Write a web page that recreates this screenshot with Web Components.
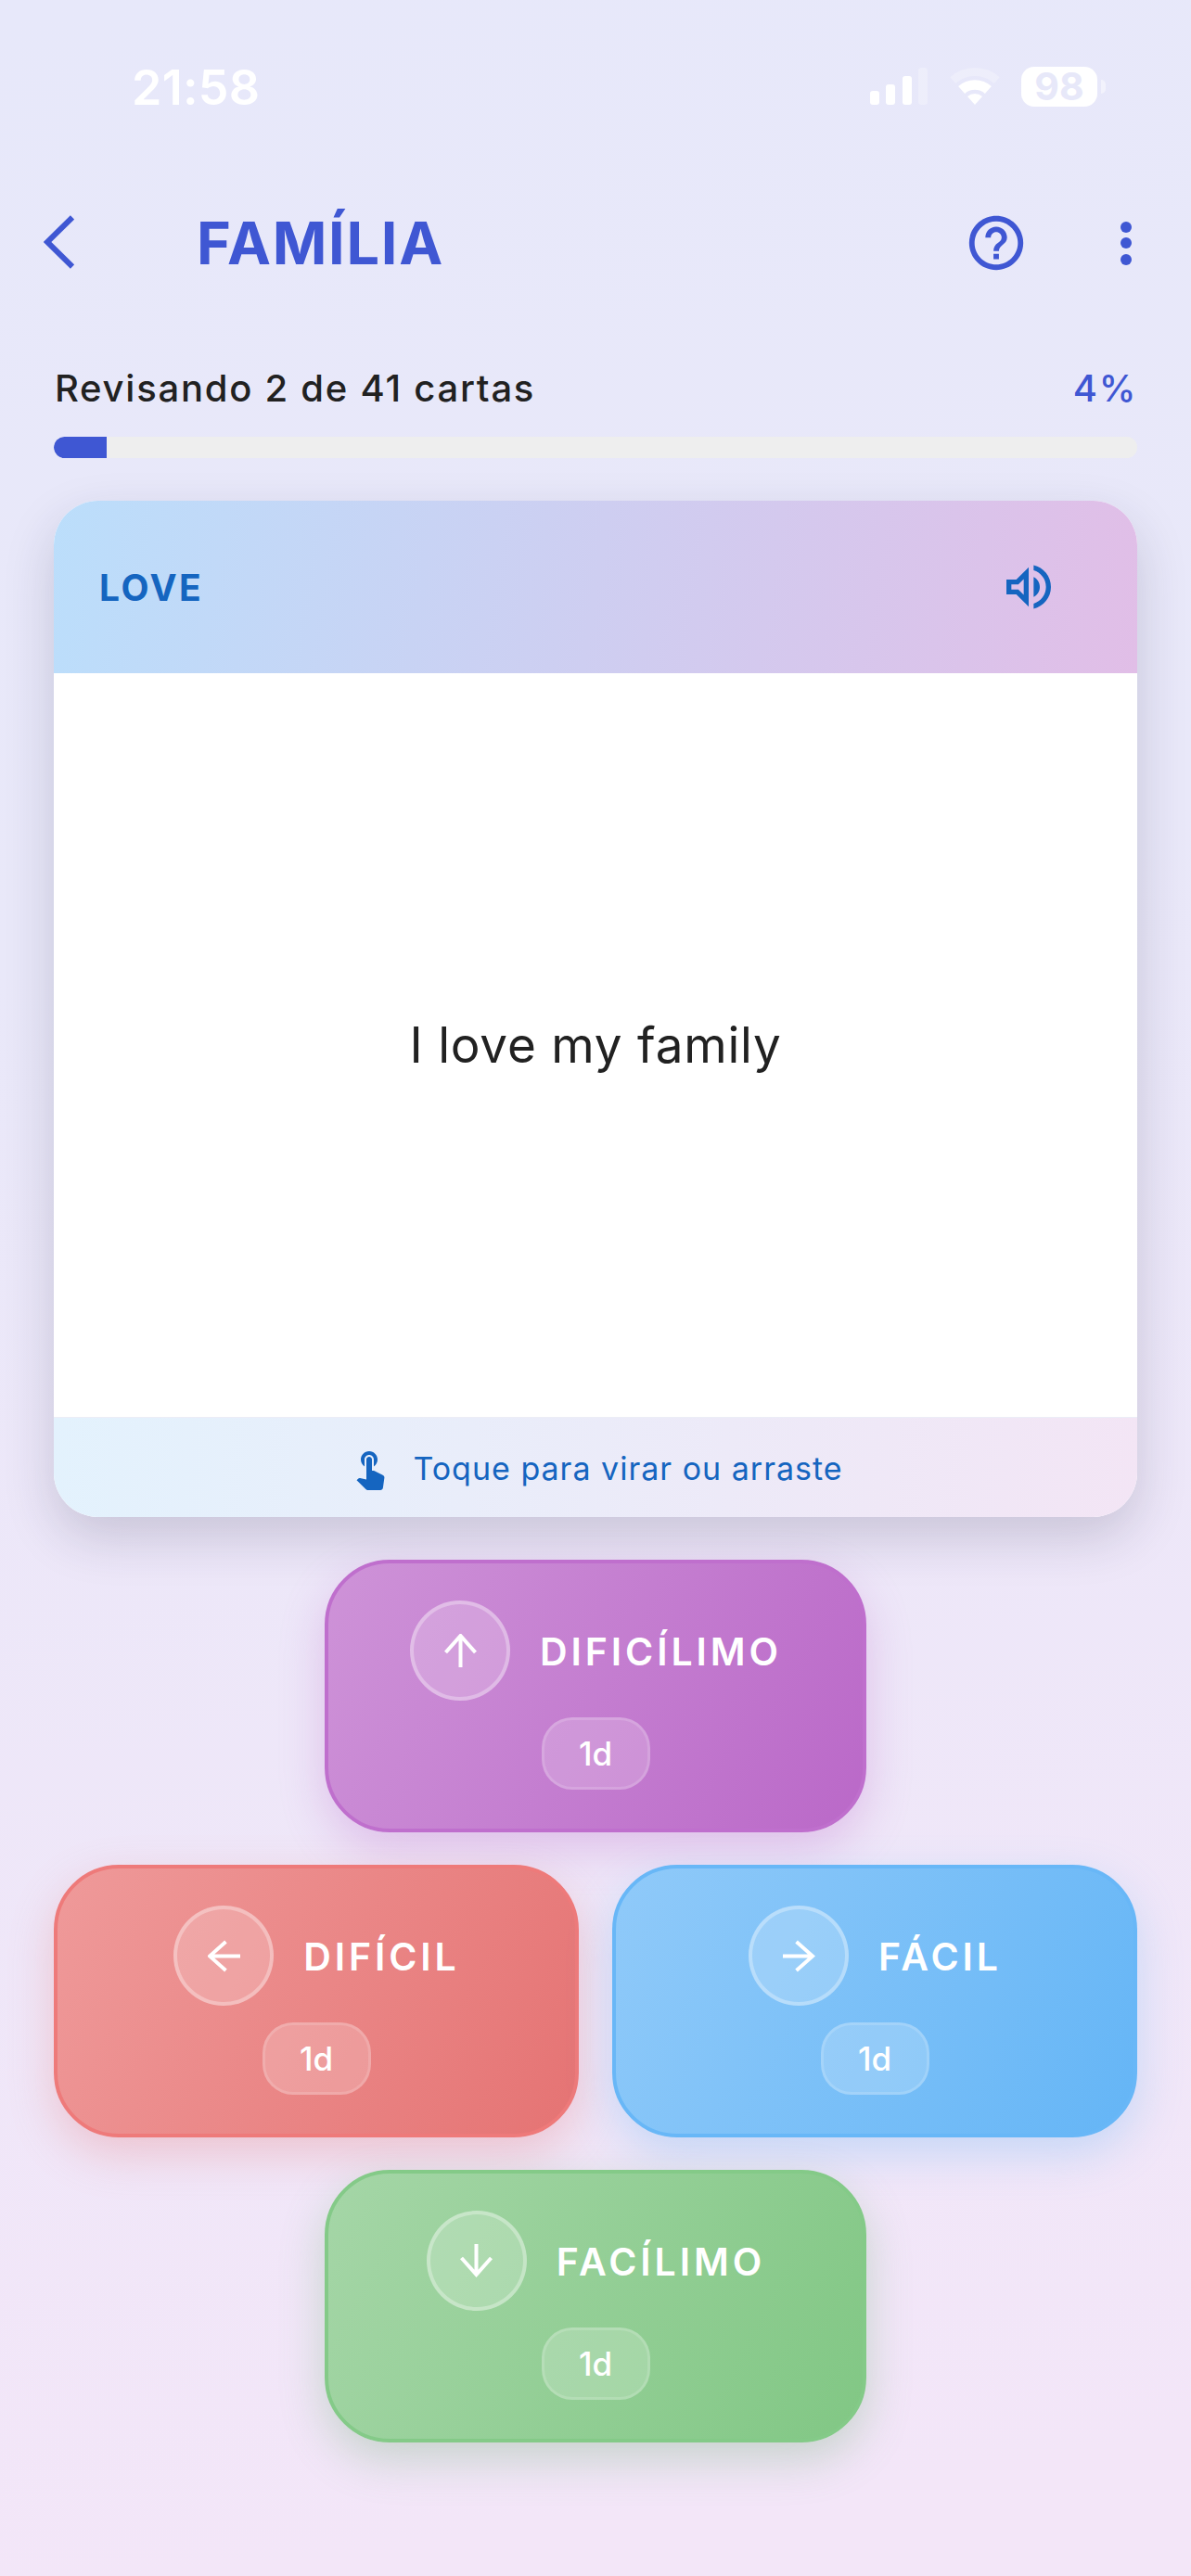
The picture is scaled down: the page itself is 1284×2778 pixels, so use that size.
<!DOCTYPE html>
<html lang="pt">
<head>
<meta charset="utf-8">
<title>Família</title>
<style>
  html, body { margin: 0; padding: 0; }
  body { width: 1284px; height: 2778px; overflow: hidden; font-family: Inter, "Liberation Sans", sans-serif;
    background: linear-gradient(172deg, #e7e8fa 0%, #e9e8f9 35%, #f3e6f8 95%, #f3e6f8 100%); }
  review-screen { display: block; }
</style>
</head>
<body>
<review-screen>
  <status-bar time="21:58" battery="98"></status-bar>
  <app-header title="FAMÍLIA"></app-header>
  <progress-row label="Revisando 2 de 41 cartas" percent="4"></progress-row>
  <flash-card word="LOVE" sentence="I love my family" hint="Toque para virar ou arraste"></flash-card>
  <rate-grid>
    <rate-button slot="top" tone="purple" dir="up" label="DIFICÍLIMO" interval="1d"></rate-button>
    <rate-button slot="left" tone="red" dir="left" label="DIFÍCIL" interval="1d"></rate-button>
    <rate-button slot="right" tone="blue" dir="right" label="FÁCIL" interval="1d"></rate-button>
    <rate-button slot="bottom" tone="green" dir="down" label="FACÍLIMO" interval="1d"></rate-button>
  </rate-grid>
</review-screen>
<script>
  function shadow(el, html) {
    el.attachShadow({ mode: 'open' }).innerHTML = html;
  }
  customElements.define('review-screen', class extends HTMLElement {
    constructor() { super(); shadow(this, `<style>:host{display:block}</style><slot></slot>`); }
  });
  customElements.define('status-bar', class extends HTMLElement {
    connectedCallback() {
      shadow(this, `<style>
        :host{display:flex;justify-content:space-between;align-items:flex-start;box-sizing:border-box;height:195px;padding:72px 92px 0 142px;color:#fff}
        .time{font:600 52px/46px Inter,sans-serif;letter-spacing:.3px}
        .icons{display:flex;align-items:flex-start;gap:23px;padding-top:1px}
        .bat{display:flex;align-items:center;gap:4px;margin-left:-1px;margin-top:-1px}
        .cell{box-sizing:border-box;width:82px;height:43px;background:#fff;border-radius:14px;color:#e7e8f9;font:700 41px/43px Inter,sans-serif;text-align:center}
        .nub{width:5px;height:15px;background:rgba(255,255,255,.45);border-radius:0 6px 6px 0}
        svg{display:block}
      </style>
      <div class="time">${this.getAttribute('time')}</div>
      <div class="icons">
        <svg width="62" height="40" viewBox="0 0 62 40" fill="#fff">
          <rect x="0" y="25" width="10" height="15" rx="3"/><rect x="17" y="18" width="10" height="22" rx="3"/>
          <rect x="35" y="9" width="10" height="31" rx="3"/><rect x="52" y="0" width="10" height="40" rx="3" opacity=".25"/>
        </svg>
        <svg width="56" height="40" viewBox="0 0 56 40" fill="none" stroke="#fff">
          <path d="M4.3 13.6A35.500 35.500 0 0 1 51.700 13.600" stroke-width="9" opacity=".25"/>
          <path d="M13.600 24A21.500 21.500 0 0 1 42.400 24" stroke-width="10.500"/>
          <path d="M28 40L20 31.100A12 12 0 0 1 36 31.100Z" fill="#fff" stroke="none"/>
        </svg>
        <div class="bat"><div class="cell">${this.getAttribute('battery')}</div><div class="nub"></div></div>
      </div>`);
    }
  });
  customElements.define('app-header', class extends HTMLElement {
    connectedCallback() {
      shadow(this, `<style>
        :host{display:flex;align-items:center;box-sizing:border-box;height:132px;padding:0 35px 0 47px;color:#3f57d3}
        svg{display:block;flex:none}
        h1{flex:1;margin:2px 0 0 132px;font:700 63px/1 Inter,sans-serif;letter-spacing:1.700px}
        .help{margin-right:70px;margin-top:1px}
      </style>
      <svg width="33" height="58" viewBox="0 0 33 58" fill="none" stroke="currentColor" stroke-width="6"><path d="M31 2.500L4 29L31 55.500"/></svg>
      <h1>${this.getAttribute('title')}</h1>
      <svg class="help" width="70" height="70" viewBox="0 0 24 24" fill="currentColor"><path d="M11 18h2v-2h-2v2zm1-16C6.480 2 2 6.480 2 12s4.480 10 10 10 10-4.480 10-10S17.520 2 12 2zm0 18c-4.410 0-8-3.590-8-8s3.590-8 8-8 8 3.590 8 8-3.590 8-8 8zm0-14c-2.210 0-4 1.790-4 4h2c0-1.100.9-2 2-2s2 .9 2 2c0 2-3 1.750-3 5h2c0-2.250 3-2.500 3-5 0-2.210-1.790-4-4-4z"/></svg>
      <svg width="70" height="70" viewBox="0 0 70 70" fill="currentColor"><circle cx="35" cy="19" r="6"/><circle cx="35" cy="36" r="6"/><circle cx="35" cy="54" r="6"/></svg>`);
    }
  });
  customElements.define('progress-row', class extends HTMLElement {
    connectedCallback() {
      const p = this.getAttribute('percent');
      shadow(this, `<style>
        :host{display:block;padding:65px 58px 0}
        .row{display:flex;justify-content:space-between;align-items:center;height:54px}
        .l{font:500 40px/54px Inter,sans-serif;color:#212121;letter-spacing:1.750px;margin-left:1px}
        .r{font:500 40px/54px Inter,sans-serif;color:#3f57d3;letter-spacing:1.600px}
        .track{margin-top:25px;height:23px;border-radius:12px;background:#eeeeee;overflow:hidden}
        .fill{width:57px;height:100%;background:#3f57d3;border-radius:12px 0 0 12px}
      </style>
      <div class="row"><span class="l">${this.getAttribute('label')}</span><span class="r">${p}%</span></div>
      <div class="track"><div class="fill"></div></div>`);
    }
  });
  customElements.define('flash-card', class extends HTMLElement {
    connectedCallback() {
      shadow(this, `<style>
        :host{display:block;margin:46px 58px 0;border-radius:48px;box-shadow:0 22px 54px rgba(40,40,70,.18)}
        .card{display:flex;flex-direction:column;height:1096px;border-radius:48px;overflow:hidden;background:#fff}
        .top{display:flex;align-items:center;justify-content:space-between;box-sizing:border-box;height:186px;padding:0 85px 0 49px;background:linear-gradient(99deg,#bbdefb,#e1bee7);color:#1565c0}
        .word{font:700 39px/1 Inter,sans-serif;letter-spacing:2.500px}
        .mid{flex:1;display:flex;align-items:center;justify-content:center;font:400 53px/1 Inter,sans-serif;letter-spacing:.8px;color:#212121}
        .foot{display:flex;align-items:center;justify-content:center;gap:22px;height:107px;border-top:1px solid #ecedf7;background:linear-gradient(95deg,#e3f2fd,#f3e5f5);color:#1565c0;font:400 34px/1 Inter,sans-serif;letter-spacing:1px}
        .foot span{margin-top:2px}
        svg{display:block}
      </style>
      <div class="card">
        <div class="top"><span class="word">${this.getAttribute('word')}</span>
          <svg width="64" height="64" viewBox="0 0 24 24" fill="currentColor"><path d="M3 9v6h4l5 5V4L7 9H3zm7-.17v6.340L7.830 13H5v-2h2.830L10 8.830zM16.500 12c0-1.770-1.020-3.290-2.500-4.030v8.050c1.480-.73 2.500-2.250 2.500-4.020zM14 3.230v2.060c2.890.86 5 3.540 5 6.710s-2.110 5.850-5 6.710v2.060c4.010-.91 7-4.490 7-8.770 0-4.280-2.990-7.860-7-8.770z"/></svg>
        </div>
        <div class="mid">${this.getAttribute('sentence')}</div>
        <div class="foot">
          <svg width="48" height="48" viewBox="0 0 24 24" fill="currentColor"><path d="M9 11.240V7.500C9 6.120 10.120 5 11.500 5S14 6.120 14 7.500v3.740c1.210-.81 2-2.180 2-3.740C16 5.010 13.990 3 11.500 3S7 5.010 7 7.500c0 1.560.79 2.930 2 3.740zm9.840 4.630l-4.540-2.260c-.17-.07-.35-.11-.54-.11H13v-6c0-.83-.67-1.500-1.500-1.500S10 6.670 10 7.500v10.740l-3.430-.72c-.08-.01-.15-.03-.24-.03-.31 0-.59.13-.79.33l-.79.8 4.940 4.940c.27.27.65.44 1.060.44h6.790c.75 0 1.300-.54 1.400-1.280l.75-5.300c.01-.07.02-.14.02-.2 0-.62-.38-1.160-.91-1.380z"/></svg>
          <span>${this.getAttribute('hint')}</span>
        </div>
      </div>`);
    }
  });
  customElements.define('rate-grid', class extends HTMLElement {
    constructor() {
      super();
      shadow(this, `<style>
        :host{display:flex;flex-direction:column;align-items:center;gap:35px;padding:46px 58px 0}
        .row{display:flex;gap:36px;width:100%}
        .narrow{width:584px}
        ::slotted([slot=left]),::slotted([slot=right]){flex:1}
      </style>
      <div class="narrow"><slot name="top"></slot></div>
      <div class="row"><slot name="left"></slot><slot name="right"></slot></div>
      <div class="narrow"><slot name="bottom"></slot></div>`);
    }
  });
  const TONES = {
    purple: ['#ce93d8', '#ba68c8', '#bf6fcd', '186,104,200'],
    red: ['#ef9a9a', '#e57373', '#ee7a7a', '229,115,115'],
    blue: ['#90caf9', '#64b5f6', '#68b7f7', '100,181,246'],
    green: ['#a5d6a7', '#81c784', '#84ca88', '100,170,105']
  };
  const ARROWS = {
    up: 'M17.500 36V2M1.500 20L17.500 2L33.500 20',
    down: 'M17.500 0V33M1.500 15L17.500 33L33.500 15',
    left: 'M36 17.500H2M20 1.500L2 17.500L20 33.500',
    right: 'M0 17.500H33M15 1.500L33 17.500L15 33.500'
  };
  customElements.define('rate-button', class extends HTMLElement {
    connectedCallback() {
      const [a, b, c, s] = TONES[this.getAttribute('tone')];
      const d = this.getAttribute('dir');
      shadow(this, `<style>
        :host{display:block;box-sizing:border-box;height:294px;border-radius:70px;border:4px solid ${c};background:linear-gradient(117deg,${a},${b}) border-box;box-shadow:0 18px 48px rgba(${s},.3);color:#fff}
        .in{display:flex;flex-direction:column;align-items:center;padding-top:40px}
        .head{display:flex;align-items:center;gap:32px;margin-left:-3px}
        .ic{display:flex;align-items:center;justify-content:center;box-sizing:border-box;width:108px;height:108px;border-radius:50%;background:rgba(255,255,255,.2);border:4px solid rgba(255,255,255,.3)}
        .lb{font:600 41px/1 Inter,sans-serif;letter-spacing:3.900px;margin-right:-3.900px;padding-top:2px}
        .bd{display:flex;align-items:center;justify-content:center;box-sizing:border-box;margin-top:18px;width:117px;height:78px;border-radius:33px;background:rgba(255,255,255,.2);border:3px solid rgba(255,255,255,.15);font:500 35px/1 Inter,sans-serif}
        svg{display:block}
      </style>
      <div class="in">
        <div class="head">
          <div class="ic"><svg width="35" height="${d === 'left' || d === 'right' ? 35 : 36}" viewBox="0 0 ${d === 'left' || d === 'right' ? '36 35' : '35 36'}" fill="none" stroke="#fff" stroke-width="4"><path d="${ARROWS[d]}"/></svg></div>
          <span class="lb">${this.getAttribute('label')}</span>
        </div>
        <div class="bd">${this.getAttribute('interval')}</div>
      </div>`);
    }
  });
</script>
</body>
</html>
